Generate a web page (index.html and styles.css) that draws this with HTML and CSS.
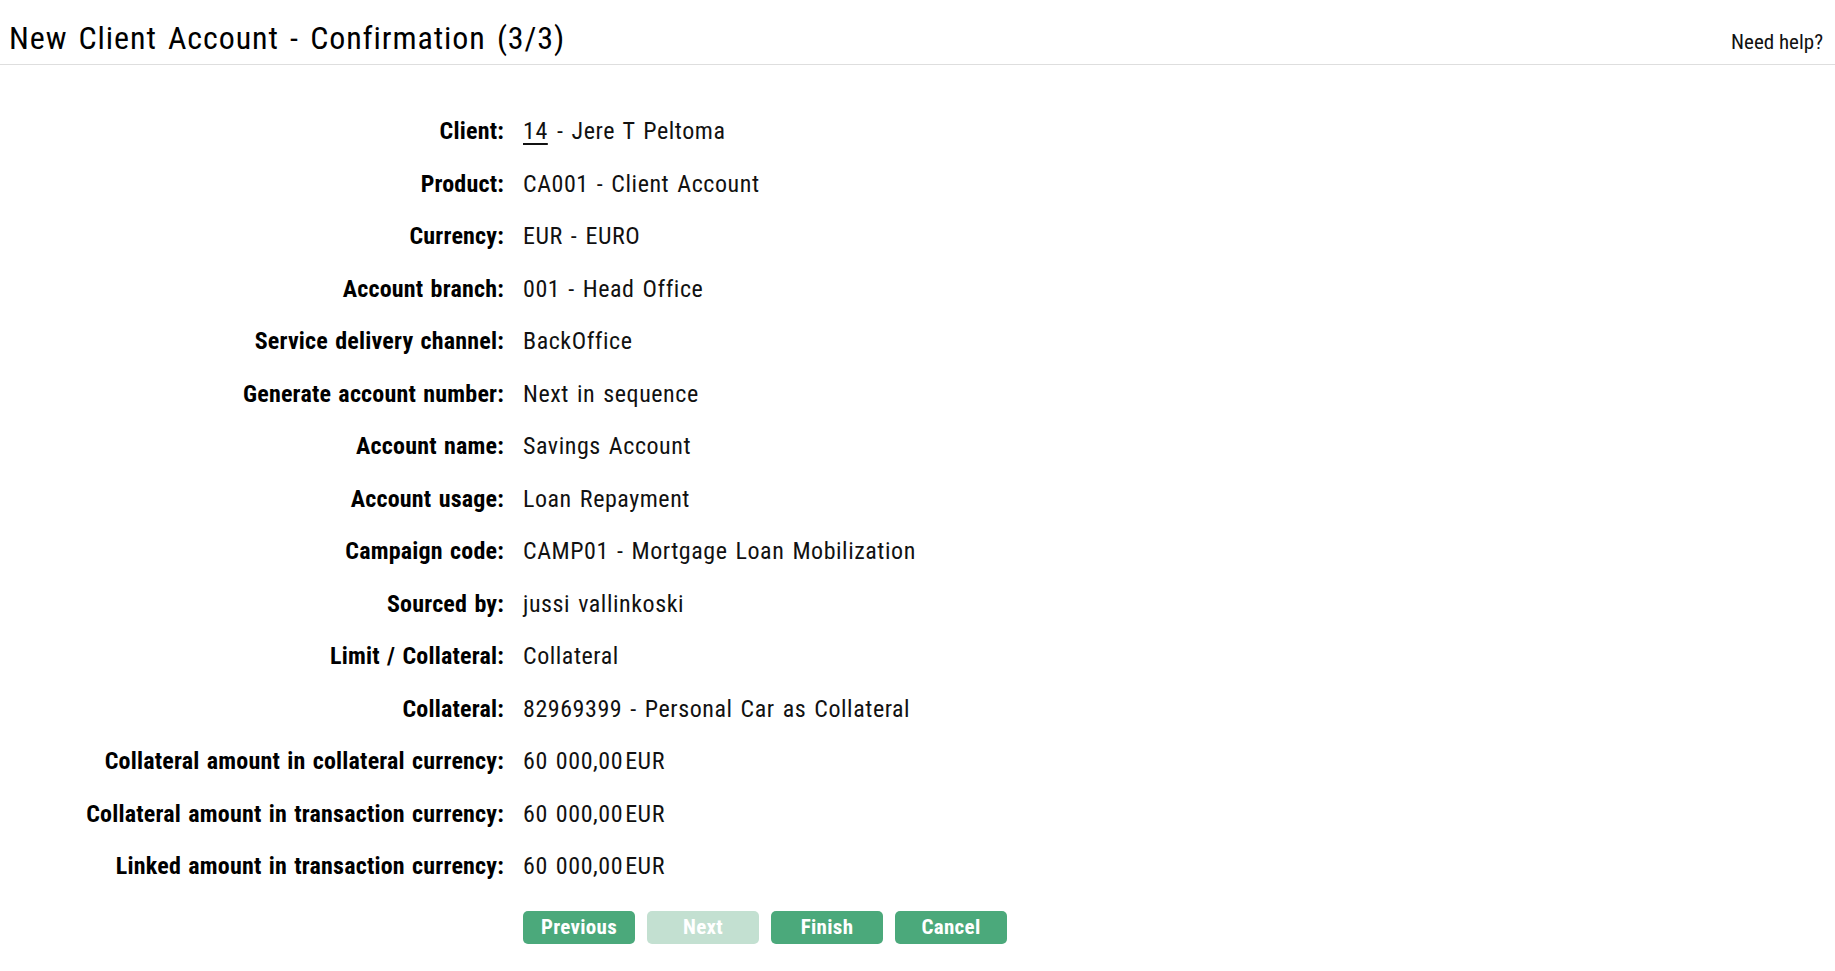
FILE: index.html
```html
<!DOCTYPE html>
<html lang="en">
<head>
<meta charset="utf-8">
<title>New Client Account - Confirmation (3/3)</title>
<link rel="stylesheet" href="styles.css">
</head>
<body>
<header class="page-header">
  <h1 class="page-title">New Client Account - Confirmation (3/3)</h1>
  <a class="help-link" href="#">Need help?</a>
</header>
<main class="confirm">
  <dl class="summary">
    <dt>Client:</dt><dd><a class="client-link" href="#">14</a> - Jere T Peltoma</dd>
    <dt>Product:</dt><dd>CA001 - Client Account</dd>
    <dt>Currency:</dt><dd>EUR - EURO</dd>
    <dt>Account branch:</dt><dd>001 - Head Office</dd>
    <dt>Service delivery channel:</dt><dd>BackOffice</dd>
    <dt>Generate account number:</dt><dd>Next in sequence</dd>
    <dt>Account name:</dt><dd>Savings Account</dd>
    <dt>Account usage:</dt><dd>Loan Repayment</dd>
    <dt>Campaign code:</dt><dd>CAMP01 - Mortgage Loan Mobilization</dd>
    <dt>Sourced by:</dt><dd>jussi vallinkoski</dd>
    <dt>Limit / Collateral:</dt><dd>Collateral</dd>
    <dt>Collateral:</dt><dd>82969399 - Personal Car as Collateral</dd>
    <dt>Collateral amount in collateral currency:</dt><dd>60 000,00<span class="cur">EUR</span></dd>
    <dt>Collateral amount in transaction currency:</dt><dd>60 000,00<span class="cur">EUR</span></dd>
    <dt>Linked amount in transaction currency:</dt><dd>60 000,00<span class="cur">EUR</span></dd>
  </dl>
  <div class="actions">
    <button class="btn" type="button">Previous</button>
    <button class="btn btn-disabled" type="button" disabled>Next</button>
    <button class="btn" type="button">Finish</button>
    <button class="btn" type="button">Cancel</button>
  </div>
</main>
</body>
</html>
```
FILE: styles.css
```css
html, body {
  margin: 0;
  padding: 0;
  background: #ffffff;
}
body {
  font-family: "Roboto Condensed", "DejaVu Sans Condensed", "Liberation Sans", sans-serif;
  color: #111111;
}
.page-header {
  display: flex;
  justify-content: space-between;
  align-items: baseline;
  padding: 18px 12px 6px 9px;
  border-bottom: 1px solid #dedede;
}
.page-title {
  margin: 0;
  font-size: 32px;
  line-height: 40px;
  font-weight: 400;
  letter-spacing: 0.9px;
  word-spacing: 3px;
  color: #000000;
}
.help-link {
  font-size: 21px;
  color: #111111;
  text-decoration: none;
}
.confirm {
  padding-top: 40px;
}
.summary {
  display: grid;
  grid-template-columns: 504px 1fr;
  grid-auto-rows: 52.5px;
  column-gap: 19px;
  align-items: center;
  margin: 0;
  font-size: 24px;
}
.summary dt {
  text-align: right;
  font-weight: 700;
  letter-spacing: 0.2px;
  word-spacing: 1.5px;
  color: #000000;
}
.summary dd {
  margin: 0;
  font-weight: 400;
  letter-spacing: 0.55px;
  word-spacing: 2px;
  color: #111111;
}
.client-link {
  display: inline-block;
  min-width: 26px;
  color: #111111;
  text-decoration: underline;
  text-underline-offset: 4px;
}
.cur {
  margin-left: 2px;
}
.actions {
  display: flex;
  gap: 12px;
  margin-top: 18px;
  padding-left: 523px;
}
.btn {
  width: 112px;
  height: 33px;
  padding: 0;
  border: none;
  border-radius: 5px;
  background: #4ba97b;
  color: #ffffff;
  font-family: inherit;
  font-size: 21px;
  font-weight: 700;
  letter-spacing: 0.3px;
  cursor: pointer;
}
.btn-disabled {
  background: #c3e0d1;
  color: #ffffff;
  cursor: default;
}
```
